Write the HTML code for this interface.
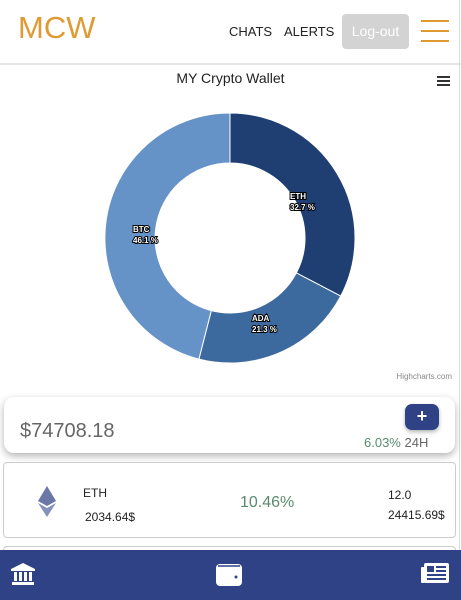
<!DOCTYPE html>
<html><head><style>
body{margin:0;width:461px;height:600px;overflow:hidden;background:#fff;font-family:"Liberation Sans",sans-serif;position:relative}
.a{position:absolute}
</style></head><body>
<div class="a" style="left:18px;top:10px;font-size:31px;color:#e09a34;letter-spacing:0px">MCW</div>
<div class="a" style="left:229px;top:24px;font-size:13px;color:#222">CHATS</div>
<div class="a" style="left:284px;top:24px;font-size:13px;color:#222">ALERTS</div>
<div class="a" style="left:342px;top:14px;width:67px;height:35px;background:#d3d3d3;border-radius:4px;color:#fff;font-size:14px;line-height:35px;text-align:center">Log-out</div>
<div class="a" style="left:421px;top:20px;width:28px;height:2px;background:#e09a34"></div>
<div class="a" style="left:421px;top:30px;width:28px;height:2px;background:#e09a34"></div>
<div class="a" style="left:421px;top:40px;width:28px;height:2px;background:#e09a34"></div>
<div class="a" style="left:0;top:63px;width:461px;height:2px;background:#e6e6e6"></div>
<div class="a" style="left:459px;top:0;width:1px;height:550px;background:#ddd"></div>
<div class="a" style="left:0;top:70px;width:461px;text-align:center;font-size:14px;color:#222">MY Crypto Wallet</div>
<div class="a" style="left:437px;top:76px;width:13px;height:2px;background:#333;box-shadow:0 4px 0 #333,0 8px 0 #333"></div>
<svg class="a" style="left:0;top:0" width="461" height="400">
<path d="M230 113 A125 125 0 0 1 340.7 296.1 L296.4 272.9 A75 75 0 0 0 230 163Z" fill="#1f3f73" stroke="#fff" stroke-width="1"/>
<path d="M340.7 296.1 A125 125 0 0 1 198.9 359.1 L211.3 310.6 A75 75 0 0 0 296.4 272.9Z" fill="#3d6a9e" stroke="#fff" stroke-width="1"/>
<path d="M198.9 359.1 A125 125 0 0 1 230 113 L230 163 A75 75 0 0 0 211.3 310.6Z" fill="#6593c7" stroke="#fff" stroke-width="1"/>
<g font-size="8" fill="#fff" stroke="#000" stroke-width="2" paint-order="stroke" font-weight="bold">
<text x="290" y="199">ETH</text><text x="290" y="210">32.7 %</text>
<text x="252" y="321">ADA</text><text x="252" y="332">21.3 %</text>
<text x="133" y="232">BTC</text><text x="133" y="243">46.1 %</text>
</g>
<text x="452" y="379" font-size="8" fill="#888" text-anchor="end">Highcharts.com</text>
</svg>
<div class="a" style="left:4px;top:397px;width:451px;height:56px;border-radius:10px;background:#fff;box-shadow:0 3px 8px rgba(0,0,0,.3)"></div>
<div class="a" style="left:20px;top:420px;font-size:20px;color:#666">$74708.18</div>
<div class="a" style="left:405px;top:404px;width:34px;height:26px;background:#2e4285;border-radius:7px;color:#fff;font-size:18px;line-height:25px;text-align:center;font-weight:bold;box-shadow:0 2px 4px rgba(0,0,0,.3)">+</div>
<div class="a" style="left:364px;top:435px;font-size:13px;color:#5a8a6e">6.03% <span style="color:#666">24H</span></div>
<div class="a" style="left:3px;top:462px;width:451px;height:74px;border:1px solid #ccc;border-radius:4px"></div>
<div class="a" style="left:3px;top:546px;width:451px;height:20px;border:1px solid #ccc;border-radius:4px"></div>
<svg class="a" style="left:37px;top:486px" width="20" height="32"><path d="M10 0L19 15L10 20L1 15Z" fill="#6a78a8"/><path d="M10 22L19 17L10 31L1 17Z" fill="#8591bd"/></svg>
<div class="a" style="left:83px;top:486px;font-size:12px;color:#222">ETH</div>
<div class="a" style="left:85px;top:510px;font-size:12px;color:#222">2034.64$</div>
<div class="a" style="left:240px;top:494px;font-size:16px;color:#5a8a6e">10.46%</div>
<div class="a" style="left:388px;top:488px;font-size:12px;color:#222">12.0</div>
<div class="a" style="left:388px;top:508px;font-size:12px;color:#222">24415.69$</div>
<div class="a" style="left:0;top:550px;width:461px;height:50px;background:#2e4285"></div>
<svg class="a" style="left:11px;top:563px" width="24" height="22" fill="#fff"><path d="M12 0L24 6V8H0V6Z"/><rect x="3" y="9" width="3" height="9"/><rect x="8" y="9" width="3" height="9"/><rect x="13" y="9" width="3" height="9"/><rect x="18" y="9" width="3" height="9"/><rect x="1" y="19" width="22" height="3"/></svg>
<svg class="a" style="left:216px;top:562px" width="26" height="24"><rect x="0" y="2" width="26" height="22" rx="4" fill="#fff"/><path d="M2 4 H24" stroke="#2e4285" stroke-width="1.5"/><circle cx="20" cy="15" r="1.5" fill="#2e4285"/></svg>
<svg class="a" style="left:421px;top:563px" width="28" height="20"><rect x="3" y="0" width="25" height="20" rx="2" fill="#fff"/><rect x="0" y="4" width="4" height="16" rx="1" fill="#fff"/><rect x="6" y="3" width="7" height="6" fill="#2e4285"/><rect x="15" y="3" width="10" height="2" fill="#2e4285"/><rect x="15" y="7" width="10" height="2" fill="#2e4285"/><rect x="6" y="11" width="19" height="2" fill="#2e4285"/><rect x="6" y="15" width="19" height="2" fill="#2e4285"/></svg>
</body></html>
